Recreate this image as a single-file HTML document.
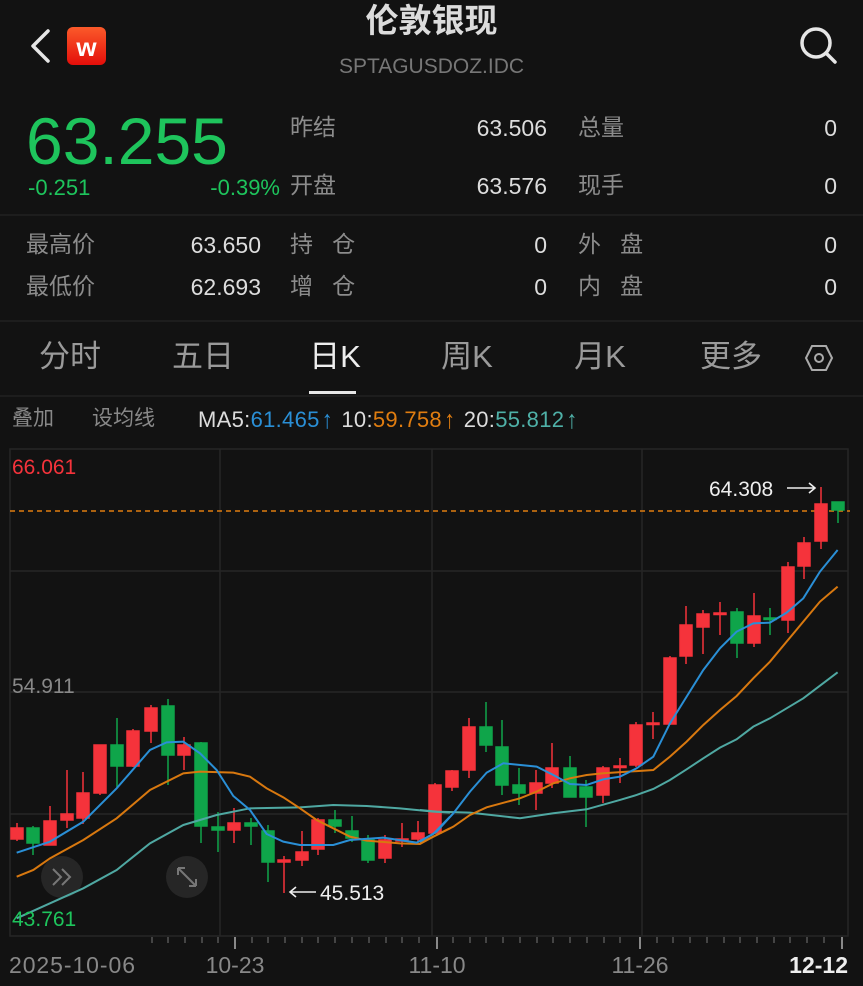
<!DOCTYPE html>
<html><head><meta charset="utf-8"><style>
*{margin:0;padding:0;box-sizing:border-box}
body{width:863px;height:986px;background:#121212;overflow:hidden;position:relative;font-family:"Liberation Sans","Noto Sans CJK SC",sans-serif;color:#ddd}
.a{position:absolute;white-space:nowrap;line-height:1}
.l{color:#8c8c8c;font-size:23px}
.v{color:#ddd;font-size:23px;text-align:right}
.tab{position:absolute;top:341px;font-size:31px;color:#9a9a9a;transform:translateX(-50%);line-height:1}
.ar{display:inline-block;margin:0 2px;transform:scaleY(1.15)}
</style></head><body>
<svg class="a" style="left:0;top:0" width="863" height="100">
<path d="M48 31 L33 46 L48 61" fill="none" stroke="#e6e6e6" stroke-width="3.5" stroke-linecap="round" stroke-linejoin="round"/>
<defs><linearGradient id="g" x1="0" y1="0" x2="0" y2="1"><stop offset="0" stop-color="#fb5a2a"/><stop offset="1" stop-color="#e40e0a"/></linearGradient></defs>
<rect x="67" y="27" width="39" height="38" rx="6" fill="url(#g)"/>
<text x="86.5" y="56" text-anchor="middle" font-family="Liberation Sans" font-weight="bold" font-size="26" fill="#fff">w</text>
<circle cx="816" cy="43" r="14" fill="none" stroke="#e6e6e6" stroke-width="3.5"/>
<path d="M826 53 L835 62" stroke="#e6e6e6" stroke-width="3.5" stroke-linecap="round"/>
</svg>
<div class="a" style="left:0;width:863px;text-align:center;top:4px;font-size:33px;color:#dcdcdc;font-weight:bold">伦敦银现</div>
<div class="a" style="left:0;width:863px;text-align:center;top:56px;font-size:21px;color:#777">SPTAGUSDOZ.IDC</div>

<div class="a" style="left:26px;top:108px;font-size:66px;color:#1ec45c">63.255</div>
<div class="a" style="left:28px;top:177px;font-size:22px;color:#1ec45c">-0.251</div>
<div class="a" style="left:170px;width:110px;text-align:right;top:177px;font-size:22px;color:#1ec45c">-0.39%</div>

<div class="a l" style="left:290px;top:116px">昨结</div>
<div class="a v" style="left:437px;width:110px;top:117px">63.506</div>
<div class="a l" style="left:578px;top:116px">总量</div>
<div class="a v" style="left:737px;width:100px;top:117px">0</div>
<div class="a l" style="left:290px;top:174px">开盘</div>
<div class="a v" style="left:437px;width:110px;top:175px">63.576</div>
<div class="a l" style="left:578px;top:174px">现手</div>
<div class="a v" style="left:737px;width:100px;top:175px">0</div>
<div class="a" style="left:0;top:214px;width:863px;height:2px;background:#1d1d1d"></div>
<div class="a l" style="left:26px;top:233px">最高价</div>
<div class="a v" style="left:151px;width:110px;top:234px">63.650</div>
<div class="a l" style="left:290px;top:233px">持&nbsp;&nbsp;&nbsp;仓</div>
<div class="a v" style="left:447px;width:100px;top:234px">0</div>
<div class="a l" style="left:578px;top:233px">外&nbsp;&nbsp;&nbsp;盘</div>
<div class="a v" style="left:737px;width:100px;top:234px">0</div>
<div class="a l" style="left:26px;top:275px">最低价</div>
<div class="a v" style="left:151px;width:110px;top:276px">62.693</div>
<div class="a l" style="left:290px;top:275px">增&nbsp;&nbsp;&nbsp;仓</div>
<div class="a v" style="left:447px;width:100px;top:276px">0</div>
<div class="a l" style="left:578px;top:275px">内&nbsp;&nbsp;&nbsp;盘</div>
<div class="a v" style="left:737px;width:100px;top:276px">0</div>
<div class="a" style="left:0;top:320px;width:863px;height:2px;background:#1d1d1d"></div>

<div class="tab" style="left:70px">分时</div>
<div class="tab" style="left:203px">五日</div>
<div class="tab" style="left:335px;color:#eee">日K</div>
<div class="tab" style="left:467px">周K</div>
<div class="tab" style="left:600px">月K</div>
<div class="tab" style="left:731px">更多</div>
<svg class="a" style="left:804px;top:343px" width="30" height="30"><path d="M8 3 H22 L28 15 L22 27 H8 L2 15 Z" fill="none" stroke="#aaa" stroke-width="2"/><circle cx="15" cy="15" r="4" fill="none" stroke="#aaa" stroke-width="2"/></svg>
<div class="a" style="left:309px;top:391px;width:47px;height:3px;background:#e6e6e6"></div>
<div class="a" style="left:0;top:395px;width:863px;height:2px;background:#1d1d1d"></div>

<div class="a" style="left:12px;top:408px;font-size:21px;color:#888">叠加</div>
<div class="a" style="left:92px;top:408px;font-size:21px;color:#888">设均线</div>
<div class="a" style="left:198px;top:409px;font-size:22px;color:#ddd;letter-spacing:0.3px">MA5:<span style="color:#2a8fd6">61.465<span class="ar">↑</span></span> 10:<span style="color:#e07d10">59.758<span class="ar">↑</span></span> 20:<span style="color:#4fb1a8">55.812<span class="ar">↑</span></span></div>

<svg class="a" style="left:0;top:0" width="863" height="986">
<g stroke="#262626" stroke-width="1.5" fill="none">
<rect x="10" y="449" width="838" height="487"/>
<path d="M10 571H848M10 692H848M10 814H848M220 449V936M432 449V936M642 449V936"/>
</g>
<g stroke="#555" stroke-width="1.5">
<path d="M152 937v6M168 937v6M185 937v6M202 937v6M218 937v6M252 937v6M268 937v6M285 937v6M302 937v6M318 937v6M335 937v6M352 937v6M369 937v6M386 937v6M402 937v6M419 937v6M453 937v6M470 937v6M486 937v6M503 937v6M520 937v6M537 937v6M553 937v6M570 937v6M587 937v6M604 937v6M620 937v6M657 937v6M673 937v6M690 937v6M707 937v6M724 937v6M740 937v6M757 937v6M774 937v6M790 937v6M807 937v6M824 937v6"/>
<path d="M235 937v12M437 937v12M640 937v12M842 937v12" stroke="#888" stroke-width="2"/>
</g>
<path d="M10 511H850" stroke="#e07d10" stroke-width="1.5" stroke-dasharray="5 4"/>
<circle cx="62" cy="877" r="21" fill="#262626"/>
<path d="M53 869l8 8-8 8M62 869l8 8-8 8" fill="none" stroke="#777" stroke-width="2"/>
<circle cx="187" cy="877" r="21" fill="#262626"/>
<path d="M178 868l18 18M178 868v7M178 868h7M196 886v-7M196 886h-7" fill="none" stroke="#777" stroke-width="2"/>
<g stroke-width="1.5">
<g stroke="#f5333b" fill="#f5333b">
<path d="M17 823V841M50 806V845M67 770V828M83 772V824M100 745V795M133 729V767M151 705V743M184 737V770M234 808V843M284 856V893M302 831V866M318 818V855M385 835V863M402 823V847M418 821V842M435 783V834M452 770V791M469 718V778M536 770V810M552 743V788M603 766V803M620 758V783M636 722V767M653 712V739M670 656V725M686 606V664M703 610V654M720 602V635M754 593V647M788 562V633M804 537V579M821 487V549"/>
<rect x="11" y="828" width="12" height="11"/><rect x="44" y="821" width="12" height="24"/><rect x="61" y="814" width="12" height="6"/><rect x="77" y="793" width="12" height="25"/><rect x="94" y="745" width="12" height="48"/><rect x="127" y="731" width="12" height="35"/><rect x="145" y="708" width="12" height="23"/><rect x="178" y="745" width="12" height="10"/><rect x="228" y="823" width="12" height="7"/><rect x="278" y="860" width="12" height="2"/><rect x="296" y="852" width="12" height="8"/><rect x="312" y="820" width="12" height="29"/><rect x="379" y="840" width="12" height="18"/><rect x="396" y="839" width="12" height="2"/><rect x="412" y="833" width="12" height="6"/><rect x="429" y="785" width="12" height="48"/><rect x="446" y="771" width="12" height="16"/><rect x="463" y="727" width="12" height="43"/><rect x="530" y="783" width="12" height="10"/><rect x="546" y="768" width="12" height="15"/><rect x="597" y="768" width="12" height="27"/><rect x="614" y="766" width="12" height="1.5"/><rect x="630" y="725" width="12" height="40"/><rect x="647" y="723" width="12" height="1.5"/><rect x="664" y="658" width="12" height="66"/><rect x="680" y="625" width="12" height="31"/><rect x="697" y="614" width="12" height="13"/><rect x="714" y="613" width="12" height="1.5"/><rect x="748" y="616" width="12" height="27"/><rect x="782" y="567" width="12" height="53"/><rect x="798" y="543" width="12" height="23"/><rect x="815" y="504" width="12" height="37"/>
</g>
<g stroke="#0fa54a" fill="#0fa54a">
<path d="M33 826V855M117 718V787M168 699V785M201 742V843M218 812V852M251 818V845M268 825V882M335 810V833M352 816V842M368 835V863M486 702V752M502 720V795M519 768V805M570 756V793M586 780V827M737 608V658M770 608V635M838 502V523"/>
<rect x="27" y="828" width="12" height="15"/><rect x="111" y="745" width="12" height="21"/><rect x="162" y="706" width="12" height="49"/><rect x="195" y="743" width="12" height="83"/><rect x="212" y="827" width="12" height="3"/><rect x="245" y="823" width="12" height="3"/><rect x="262" y="831" width="12" height="31"/><rect x="329" y="820" width="12" height="6"/><rect x="346" y="831" width="12" height="7"/><rect x="362" y="840" width="12" height="20"/><rect x="480" y="727" width="12" height="18"/><rect x="496" y="747" width="12" height="38"/><rect x="513" y="785" width="12" height="8"/><rect x="564" y="768" width="12" height="29"/><rect x="580" y="787" width="12" height="10"/><rect x="731" y="612" width="12" height="31"/><rect x="764" y="618" width="12" height="1.5"/><rect x="832" y="502" width="12" height="8"/>
</g>
</g>
<g fill="none" stroke-width="6" transform="translate(0,690) scale(0.3333)">
<polyline stroke="#4fa8a2" points="50,685 150,640 250,595 350,540 450,460 550,405 650,375 750,355 900,352 1000,345 1100,348 1200,355 1300,365 1350,368"/>
<polyline stroke="#d8780f" points="50,560 100,540 150,505 250,450 350,385 450,300 550,250 600,245 700,248 750,260 800,295 850,322 900,355 950,390 1000,415 1050,440 1100,452 1200,460 1260,462 1300,440 1350,415"/>
<polyline stroke="#2a8fd6" points="50,488 150,455 250,395 350,295 450,180 500,157 550,155 600,190 650,240 700,318 750,360 800,432 850,455 900,465 1000,465 1050,450 1150,443 1250,458 1300,432 1350,380"/>
</g>
<g fill="none" stroke-width="6" transform="translate(420,480) scale(0.3333)">
<polyline stroke="#4fa8a2" points="0,990 50,995 150,998 300,1015 400,1000 500,988 600,960 650,945 700,927 750,900 800,868 850,835 900,803 950,778 1000,740 1050,715 1100,685 1150,655 1200,617 1253,577"/>
<polyline stroke="#d8780f" points="0,1090 100,1040 150,1005 200,982 300,955 350,935 400,910 450,895 500,885 550,880 700,870 750,830 800,785 850,735 900,690 950,648 1000,595 1050,545 1100,485 1150,425 1200,365 1253,320"/>
<polyline stroke="#2a8fd6" points="0,1085 50,1055 100,1000 150,935 200,878 250,850 350,860 400,885 450,912 500,915 550,898 600,890 650,865 700,830 750,730 800,650 850,570 900,505 950,455 1000,430 1050,428 1100,398 1150,355 1200,275 1253,210"/>
</g>
<g font-family="Liberation Sans" font-size="21">
<text x="12" y="474" fill="#f5333b">66.061</text>
<text x="12" y="693" fill="#888">54.911</text>
<text x="12" y="926" fill="#1ec45c">43.761</text>
<text x="709" y="496" fill="#eee">64.308</text>
<text x="320" y="900" fill="#eee">45.513</text>
</g>
<g stroke="#eee" stroke-width="1.6" fill="none">
<path d="M787 488H815M809 483L815 488L809 493"/>
<path d="M290 892H316M296 887L290 892L296 897"/>
</g>
<g font-family="Liberation Sans" font-size="23" fill="#888">
<text x="9" y="973" textLength="126">2025-10-06</text>
<text x="235" y="973" text-anchor="middle">10-23</text>
<text x="437" y="973" text-anchor="middle">11-10</text>
<text x="640" y="973" text-anchor="middle">11-26</text>
<text x="848" y="973" text-anchor="end" fill="#eee" font-weight="bold">12-12</text>
</g>
</svg>
</body></html>
